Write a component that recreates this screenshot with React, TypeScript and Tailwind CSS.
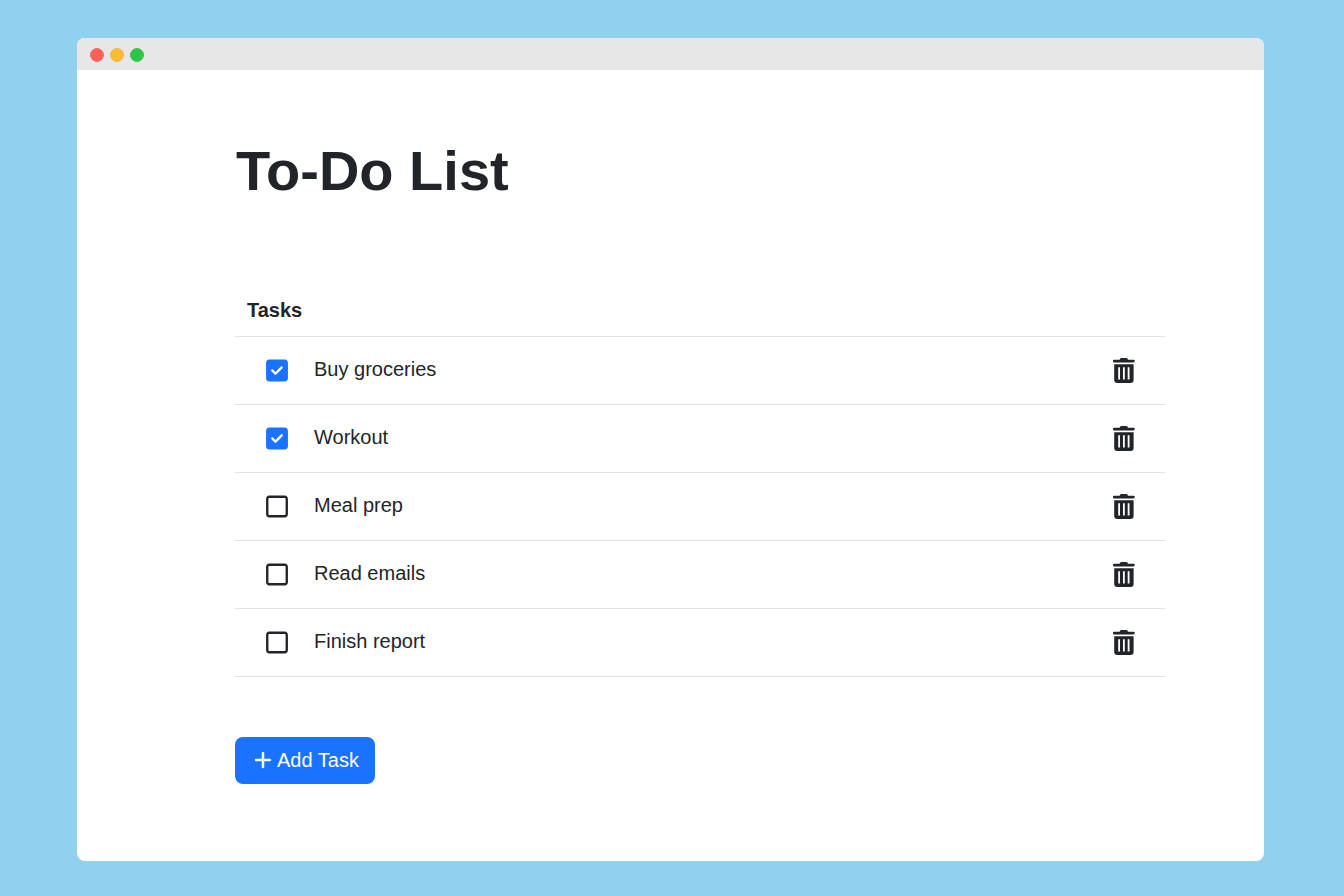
import { useState } from "react";
import { FaPlus, FaRegSquare, FaSquareCheck } from "react-icons/fa6";

type Task = { id: number; name: string; done: boolean };

const initialTasks: Task[] = [
  { id: 1, name: "Buy groceries", done: true },
  { id: 2, name: "Workout", done: true },
  { id: 3, name: "Meal prep", done: false },
  { id: 4, name: "Read emails", done: false },
  { id: 5, name: "Finish report", done: false },
];

function TitleBar() {
  return (
    <div className="flex h-8 items-center gap-[6px] bg-[#e7e7e7] px-[13px] pt-[2px]">
      <span className="size-[14px] rounded-full border border-[#ee7069] bg-[#ff5f57]" />
      <span className="size-[14px] rounded-full border border-[#e6b45a] bg-[#febc2e]" />
      <span className="size-[14px] rounded-full border border-[#4fb960] bg-[#28c840]" />
    </div>
  );
}

function TrashIcon() {
  return (
    <svg viewBox="0 0 22 25" className="h-[25px] w-[22px]" fill="currentColor" aria-hidden="true">
      <path d="M7.2.6C7.4.2 7.8 0 8.3 0h5c.5 0 .9.2 1.1.6l.6 1.1h5.4a1.4 1.4 0 0 1 0 2.8H1.3a1.4 1.4 0 0 1 0-2.8h5.3z" />
      <path
        fillRule="evenodd"
        d="M1.2 6.3h19.4V22a3 3 0 0 1-3 3H4.2a3 3 0 0 1-3-3zM5.2 9.2v12.4h1.8V9.2zM10 9.2v12.4h1.8V9.2zM14.7 9.2v12.4h1.8V9.2z"
      />
    </svg>
  );
}

function TaskRow({
  task,
  onToggle,
  onDelete,
}: {
  task: Task;
  onToggle: () => void;
  onDelete: () => void;
}) {
  const inputId = `task-${task.id}`;
  return (
    <tr className="h-[68px] border-b border-[#dee2e6]">
      <td className="p-0 pl-[31px]">
        <div className="flex items-center gap-[26px]">
          <span className="grid place-items-center">
            <input
              id={inputId}
              type="checkbox"
              checked={task.done}
              onChange={onToggle}
              className="col-start-1 row-start-1 size-[22px] cursor-pointer appearance-none rounded"
            />
            {task.done ? (
              <FaSquareCheck className="pointer-events-none col-start-1 row-start-1 h-[25px] w-[22px] text-[#1a73ff]" />
            ) : (
              <FaRegSquare className="pointer-events-none col-start-1 row-start-1 h-[25px] w-[22px]" />
            )}
          </span>
          <label htmlFor={inputId} className="cursor-pointer pb-[3px] text-xl leading-[30px]">
            {task.name}
          </label>
        </div>
      </td>
      <td className="p-0 pr-[30px]">
        <button
          type="button"
          aria-label={`Delete ${task.name}`}
          onClick={onDelete}
          className="ml-auto block cursor-pointer"
        >
          <TrashIcon />
        </button>
      </td>
    </tr>
  );
}

export default function App() {
  const [tasks, setTasks] = useState(initialTasks);

  const toggle = (id: number) =>
    setTasks(tasks.map((t) => (t.id === id ? { ...t, done: !t.done } : t)));
  const remove = (id: number) => setTasks(tasks.filter((t) => t.id !== id));
  const add = () =>
    setTasks([...tasks, { id: Math.max(0, ...tasks.map((t) => t.id)) + 1, name: "New task", done: false }]);

  return (
    <div className="flex min-h-screen flex-col bg-[#90d1f0] pt-[38px] pr-20 pb-[35px] pl-[77px] font-['Liberation_Sans',Arial,sans-serif] text-[#212529]">
      <div className="flex flex-1 flex-col overflow-hidden rounded-lg bg-white">
        <TitleBar />
        <main className="pt-[67px] pr-[99px] pb-16 pl-[158px]">
          <h1 className="pl-px text-[56px] leading-[68px] font-bold">To-Do List</h1>
          <table className="mt-20 w-full border-collapse">
            <thead>
              <tr className="h-[51px] border-b border-[#dee2e6]">
                <th colSpan={2} className="p-0 pl-3 text-left text-xl leading-[30px] font-bold">
                  Tasks
                </th>
              </tr>
            </thead>
            <tbody>
              {tasks.map((task) => (
                <TaskRow
                  key={task.id}
                  task={task}
                  onToggle={() => toggle(task.id)}
                  onDelete={() => remove(task.id)}
                />
              ))}
            </tbody>
          </table>
          <button
            type="button"
            onClick={add}
            className="mt-[60px] flex h-[47px] cursor-pointer items-center gap-[5px] rounded-lg bg-[#1a73ff] pr-4 pl-[19px] text-xl text-white"
          >
            <FaPlus className="h-5 w-[18px]" />
            Add Task
          </button>
        </main>
      </div>
    </div>
  );
}
